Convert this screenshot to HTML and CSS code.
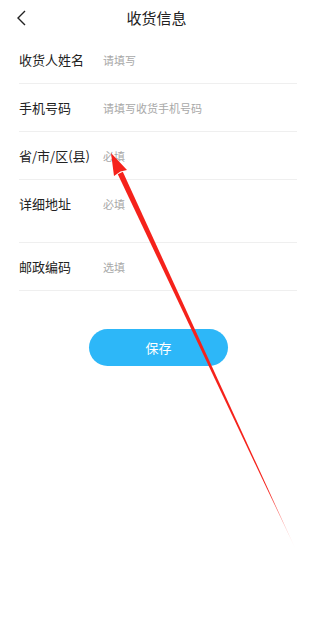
FILE: index.html
```html
<!DOCTYPE html>
<html lang="zh-CN">
<head>
    <meta charset="UTF-8">
    <meta name="viewport" content="width=device-width, initial-scale=1.0">
    <title>收货信息</title>
    <link rel="stylesheet" href="styles.css">
</head>
<body>
    <div class="page">
        <div class="header">
            <span class="back">
                <svg width="12" height="16" viewBox="0 0 12 16">
                    <path d="M9 1 L2 8 L9 15" fill="none" stroke="#222" stroke-width="1.4"/>
                </svg>
            </span>
            <h1 class="title">收货信息</h1>
        </div>

        <div class="form">
            <div class="row">
                <span class="label">收货人姓名</span>
                <span class="input">请填写</span>
            </div>
            <div class="row">
                <span class="label">手机号码</span>
                <span class="input">请填写收货手机号码</span>
            </div>
            <div class="row">
                <span class="label">省/市/区(县)</span>
                <span class="input">必填</span>
            </div>
            <div class="row row-tall">
                <span class="label">详细地址</span>
                <span class="input">必填</span>
            </div>
            <div class="row">
                <span class="label">邮政编码</span>
                <span class="input">选填</span>
            </div>
        </div>

        <div class="btn-wrap">
            <button class="btn">保存</button>
        </div>

        <!-- annotation arrow -->
        <svg class="arrow" width="313" height="636" viewBox="0 0 313 636">
            <defs>
                <linearGradient id="fade" x1="111" y1="153" x2="296" y2="550" gradientUnits="userSpaceOnUse">
                    <stop offset="0" stop-color="#f5221b"/>
                    <stop offset="0.85" stop-color="#f5221b"/>
                    <stop offset="1" stop-color="#f5221b" stop-opacity="0"/>
                </linearGradient>
            </defs>
            <polygon points="122.8,171.8 117.8,174.2 296,550" fill="url(#fade)"/>
            <polygon points="111,153 127,170 120.5,171.5 114,176" fill="#f5221b"/>
        </svg>
    </div>
</body>
</html>
```

FILE: styles.css
```css
* {
    margin: 0;
    padding: 0;
    box-sizing: border-box;
}

body {
    font-family: "Noto Sans CJK SC", "Noto Sans", sans-serif;
    background: #fff;
    color: #222;
}

.page {
    position: relative;
    width: 313px;
    height: 636px;
    overflow: hidden;
}

.header {
    position: relative;
    height: 36px;
    display: flex;
    align-items: center;
    justify-content: center;
}

.back {
    position: absolute;
    left: 16px;
    top: 10px;
    display: flex;
}

.title {
    font-size: 15px;
    font-weight: normal;
    color: #222;
    line-height: 36px;
}

.form {
    padding: 0 16px 0 19px;
}

.row {
    display: flex;
    align-items: center;
    height: 48px;
    border-bottom: 1px solid #efefef;
}

.row-tall {
    height: 63px;
    align-items: flex-start;
    padding-top: 14px;
}

.label {
    width: 84px;
    font-size: 13px;
    line-height: 20px;
    color: #222;
}

.input {
    font-size: 11px;
    line-height: 20px;
    color: #a8a8a8;
}

.btn-wrap {
    display: flex;
    justify-content: center;
    padding-top: 38px;
    padding-left: 4px;
}

.btn {
    width: 139px;
    height: 37px;
    border: none;
    border-radius: 19px;
    background: #2db7f8;
    color: #fff;
    font-family: inherit;
    font-size: 13px;
}

.arrow {
    position: absolute;
    left: 0;
    top: 0;
    pointer-events: none;
}
```
